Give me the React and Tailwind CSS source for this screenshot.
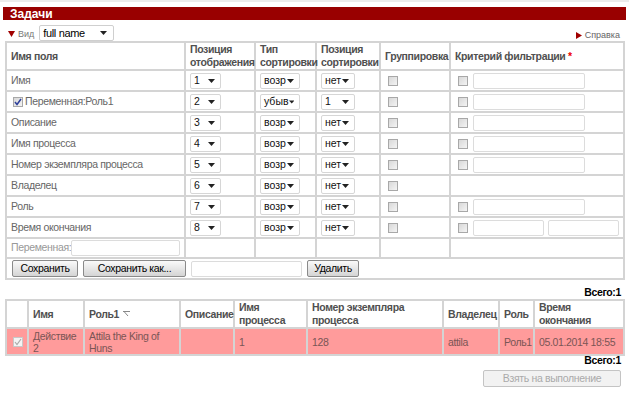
const font = { fontFamily: '"Liberation Sans", Arial, sans-serif' };

function Arrow() {
  return (
    <svg width="7" height="4" viewBox="0 0 7 4">
      <polygon points="0,0 7,0 3.5,4" fill="#222" />
    </svg>
  );
}

function Select({ value, w = 'w-[31px]' }) {
  return (
    <div className={`${w} h-[16px] border border-[#d6d6d6] rounded-[2px] bg-white flex items-center justify-between pl-[3px] pr-[5px] text-[10.5px] tracking-normal text-[#111]`}>
      <span>{value}</span>
      <Arrow />
    </div>
  );
}

function Check({ checked }) {
  return (
    <div className="w-[10px] h-[10px] border border-[#a8a8a8] bg-gradient-to-br from-[#d8d8d8] to-[#f4f4f4] flex items-center justify-center shrink-0">
      {checked && (
        <svg width="8" height="8" viewBox="0 0 8 8">
          <path d="M1 4 L3 6.5 L7 1" fill="none" stroke="#2d3f9a" strokeWidth="1.5" />
        </svg>
      )}
    </div>
  );
}

function Input({ w }) {
  return <div className={`${w} h-[16px] border border-[#dcdcdc] rounded-[2px] bg-white`} />;
}

function Btn({ children, w }) {
  return (
    <div className={`${w} h-[17px] border border-[#8a8a8a] rounded-[2px] bg-gradient-to-b from-[#fafafa] to-[#d4d4d4] flex items-center justify-center text-[10.5px] text-black`}>
      {children}
    </div>
  );
}

const rows = [
  { name: 'Имя', pos: '1', sort: 'возр', spos: 'нет', filter: 'one' },
  { name: 'Переменная:Роль1', pos: '2', sort: 'убыв', spos: '1', filter: 'one', var: true },
  { name: 'Описание', pos: '3', sort: 'возр', spos: 'нет', filter: 'one' },
  { name: 'Имя процесса', pos: '4', sort: 'возр', spos: 'нет', filter: 'one' },
  { name: 'Номер экземпляра процесса', pos: '5', sort: 'возр', spos: 'нет', filter: 'one' },
  { name: 'Владелец', pos: '6', sort: 'возр', spos: 'нет', filter: null },
  { name: 'Роль', pos: '7', sort: 'возр', spos: 'нет', filter: 'one' },
  { name: 'Время окончания', pos: '8', sort: 'возр', spos: 'нет', filter: 'two' },
];

const td = 'border-2 border-[#d4d4d4] px-[4px] align-middle';
const th = 'border-2 border-[#d4d4d4] px-[4px] text-left align-middle font-bold text-[#505050] leading-[13px]';

export default function App() {
  return (
    <div className="w-[629px] h-[395px] bg-white text-[10.5px] tracking-[-0.35px] text-[#666] overflow-hidden" style={font}>
      <div className="h-[2px] bg-[#ececec]" />

      {/* Header bar */}
      <div className="mx-[3px] mt-[5px] h-[13px] bg-[#990000] flex items-center pl-[7px] text-white font-bold text-[12px] tracking-normal">
        Задачи
      </div>

      {/* View row */}
      <div className="flex items-center justify-between pl-[8px] pr-[9px] mt-[5px] h-[16px]">
        <div className="flex items-center">
          <svg width="7" height="6" viewBox="0 0 7 6" className="mr-[3px] mt-[2px]">
            <polygon points="0,0 7,0 3.5,6" fill="#a00000" />
          </svg>
          <span className="text-[9px] tracking-normal text-[#777] mt-[3px]">Вид</span>
          <div className="ml-[5px] w-[75px] h-[16px] border border-[#cfcfcf] rounded-[2px] bg-white flex items-center justify-between pl-[3px] pr-[6px] text-[11px] text-black">
            <span>full name</span>
            <Arrow />
          </div>
        </div>
        <div className="flex items-center text-[9px] tracking-normal text-[#666] mt-[5px]">
          <svg width="6" height="7" viewBox="0 0 6 7" className="mr-[3px]">
            <polygon points="0,0 6,3.5 0,7" fill="#a00000" />
          </svg>
          Справка
        </div>
      </div>

      {/* Settings table */}
      <div className="px-[5px]">
        <table className="border-collapse table-fixed w-[618px]">
          <colgroup>
            <col className="w-[179px]" />
            <col className="w-[70px]" />
            <col className="w-[61px]" />
            <col className="w-[64px]" />
            <col className="w-[70px]" />
            <col className="w-[174px]" />
          </colgroup>
          <thead>
            <tr className="h-[27px]">
              <th className={th}>Имя поля</th>
              <th className={th}>Позиция<br />отображения</th>
              <th className={th}>Тип<br />сортировки</th>
              <th className={th}>Позиция<br />сортировки</th>
              <th className={th}>Группировка</th>
              <th className={th}>
                Критерий фильтрации <span className="text-[#e00]">*</span>
              </th>
            </tr>
          </thead>
          <tbody>
            {rows.map((r) => (
              <tr key={r.name} className="h-[21px]">
                <td className={td}>
                  {r.var ? (
                    <div className="flex items-center gap-[2px] pl-[2px]">
                      <Check checked />
                      <span>{r.name}</span>
                    </div>
                  ) : (
                    r.name
                  )}
                </td>
                <td className={td}><Select value={r.pos} /></td>
                <td className={td}><Select value={r.sort} w="w-[40px]" /></td>
                <td className={td}><Select value={r.spos} w="w-[34px]" /></td>
                <td className={`${td} pl-[7px]`}><Check /></td>
                <td className={`${td} pl-[7px]`}>
                  {r.filter && (
                    <div className="flex items-center gap-[5px]">
                      <Check />
                      {r.filter === 'one' ? (
                        <Input w="w-[112px]" />
                      ) : (
                        <div className="flex gap-[4px]">
                          <Input w="w-[71px]" />
                          <Input w="w-[71px]" />
                        </div>
                      )}
                    </div>
                  )}
                </td>
              </tr>
            ))}
            <tr className="h-[20px]">
              <td className={td}>
                <div className="flex items-center text-[#999]">
                  Переменная:
                  <Input w="w-[111px]" />
                </div>
              </td>
              <td className={td} />
              <td className={td} />
              <td className={td} />
              <td className={td} />
              <td className={td} />
            </tr>
            <tr className="h-[21px]">
              <td colSpan={6} className={td}>
                <div className="flex items-center gap-[5px] pl-[1px]">
                  <Btn w="w-[66px]">Сохранить</Btn>
                  <Btn w="w-[103px]">Сохранить как...</Btn>
                  <Input w="w-[111px]" />
                  <Btn w="w-[52px]">Удалить</Btn>
                </div>
              </td>
            </tr>
          </tbody>
        </table>
      </div>

      <div className="text-right pr-[8px] mt-[6px] font-bold text-black leading-[12px]">Всего:1</div>

      {/* Results table */}
      <div className="px-[5px] mt-[1px]">
        <table className="border-collapse table-fixed w-[618px]">
          <colgroup>
            <col className="w-[22px]" />
            <col className="w-[56px]" />
            <col className="w-[96px]" />
            <col className="w-[54px]" />
            <col className="w-[73px]" />
            <col className="w-[136px]" />
            <col className="w-[56px]" />
            <col className="w-[35px]" />
            <col className="w-[90px]" />
          </colgroup>
          <thead>
            <tr className="h-[26px]">
              <th className={th} />
              <th className={th}>Имя</th>
              <th className={th}>
                <span className="inline-flex items-center gap-[4px]">
                  Роль1
                  <svg width="7" height="6" viewBox="0 0 7 6">
                    <path d="M0 0.5 H7 M1 0.5 L5 5" stroke="#888" strokeWidth="1" fill="none" />
                  </svg>
                </span>
              </th>
              <th className={th}>Описание</th>
              <th className={th}>Имя<br />процесса</th>
              <th className={th}>Номер экземпляра<br />процесса</th>
              <th className={th}>Владелец</th>
              <th className={th}>Роль</th>
              <th className={th}>Время<br />окончания</th>
            </tr>
          </thead>
          <tbody>
            <tr className="h-[27px] bg-[#ff9b9b] text-[#7a5555] leading-[12px]">
              <td className={`${td} pl-[6px]`}>
                <div className="w-[10px] h-[10px] border border-[#c8c8c8] bg-[#f4f4f4] flex items-center justify-center">
                  <svg width="8" height="8" viewBox="0 0 8 8">
                    <path d="M1 4 L3 6.5 L7 1" fill="none" stroke="#aaa" strokeWidth="1.2" />
                  </svg>
                </div>
              </td>
              <td className={td}>Действие<br />2</td>
              <td className={td}>Attila the King of<br />Huns</td>
              <td className={td} />
              <td className={td}>1</td>
              <td className={td}>128</td>
              <td className={td}>attila</td>
              <td className={td}>Роль1</td>
              <td className={`${td} whitespace-nowrap`}>05.01.2014 18:55</td>
            </tr>
          </tbody>
        </table>
      </div>

      <div className="text-right pr-[8px] -mt-[2px] font-bold text-black leading-[12px]">Всего:1</div>

      <div className="flex justify-end pr-[8px] mt-[4px]">
        <div className="w-[138px] h-[17px] border border-[#c4c4c4] rounded-[2px] bg-[#f2f2f2] flex items-center justify-center text-[#aaa]">
          Взять на выполнение
        </div>
      </div>
    </div>
  );
}
